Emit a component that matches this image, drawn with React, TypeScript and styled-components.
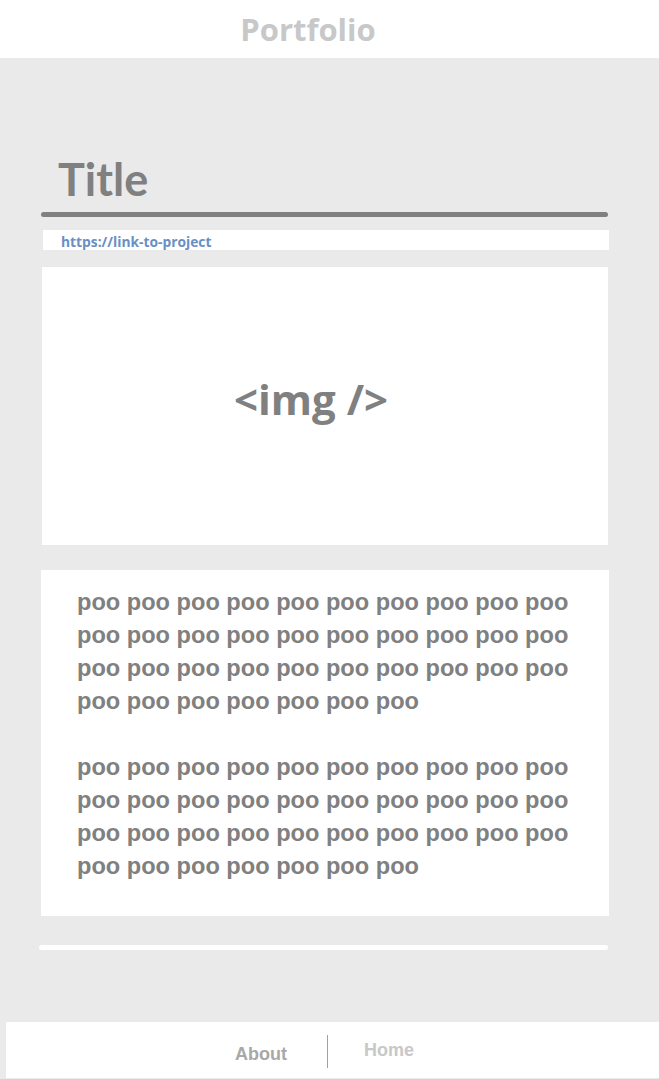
import React from "react";
import styled, { createGlobalStyle } from "styled-components";

const Global = createGlobalStyle`
  html, body {
    margin: 0;
    padding: 0;
    background: #eaeaea;
  }
  * { box-sizing: border-box; }
`;

const Page = styled.div`
  display: flex;
  flex-direction: column;
  min-height: 1079px;
  background: #eaeaea;
`;

const Header = styled.header`
  height: 58px;
  background: #ffffff;
  display: flex;
  align-items: center;
  justify-content: center;
  padding-right: 43px;
`;

const Brand = styled.h1`
  margin: 0;
  font-family: "Open Sans", sans-serif;
  font-weight: 700;
  font-size: 31px;
  line-height: 1;
  color: #c8c8c8;
`;

const Main = styled.main`
  width: 568px;
  margin: 0 0 0 41px;
  display: flex;
  flex-direction: column;
  padding-top: 99px;
`;

const Title = styled.h2`
  margin: 0;
  padding-left: 17px;
  font-family: Lato, "Open Sans", sans-serif;
  font-weight: 700;
  font-size: 45px;
  line-height: 1;
  color: #808080;
`;

const Rule = styled.div<{ $light?: boolean; $top: number }>`
  height: 5px;
  border-radius: 3px;
  margin-top: ${(p) => p.$top}px;
  margin-left: ${(p) => (p.$light ? -2 : 0)}px;
  width: ${(p) => (p.$light ? 569 : 567)}px;
  background: ${(p) => (p.$light ? "#ffffff" : "#808080")};
`;

const LinkBar = styled.div`
  margin-top: 13px;
  margin-left: 2px;
  height: 20px;
  background: #ffffff;
  display: flex;
  align-items: center;
  padding-left: 18px;
  padding-top: 3px;
`;

const LinkText = styled.a`
  font-family: "Open Sans", sans-serif;
  font-weight: 700;
  font-size: 13.8px;
  color: #6a8fc4;
  text-decoration: none;
  line-height: 1;
`;

const ImageBox = styled.div`
  margin-top: 17px;
  margin-left: 1px;
  width: 566px;
  height: 278px;
  background: #ffffff;
  display: flex;
  align-items: center;
  justify-content: center;
  padding-bottom: 16px;
  padding-right: 28px;
`;

const ImgLabel = styled.span`
  font-family: "Open Sans", sans-serif;
  font-weight: 700;
  font-size: 42px;
  color: #808080;
`;

const TextCard = styled.section`
  margin-top: 25px;
  background: #ffffff;
  padding: 16px 20px 34px 36px;
  height: 346px;
`;

const Para = styled.p`
  margin: 0 0 33px 0;
  font-family: "Liberation Sans", Arial, sans-serif;
  font-weight: 700;
  font-size: 23.6px;
  line-height: 33px;
  color: #808080;
  &:last-child { margin-bottom: 0; }
`;

const Footer = styled.footer`
  margin-top: auto;
  margin-left: 6px;
  height: 56px;
  margin-bottom: 1px;
  background: #ffffff;
  display: flex;
  align-items: center;
  justify-content: center;
  padding-right: 16px;
`;

const NavItem = styled.a<{ $muted?: boolean }>`
  font-family: "Liberation Sans", Arial, sans-serif;
  font-weight: 700;
  font-size: 18px;
  line-height: 1;
  text-decoration: none;
  color: ${(p) => (p.$muted ? "#c8c8c8" : "#a8a8a8")};
  margin-top: ${(p) => (p.$muted ? 0 : 8)}px;
`;

const Divider = styled.span`
  width: 1px;
  height: 33px;
  background: #a0a0a0;
  margin: 2px 36px 0 40px;
`;

const poo = (n: number) => Array.from({ length: n }, () => "poo").join(" ");

export default function App() {
  return (
    <>
      <Global />
      <Page>
        <Header>
          <Brand>Portfolio</Brand>
        </Header>
        <Main>
          <Title>Title</Title>
          <Rule $top={10} />
          <LinkBar>
            <LinkText href="#">https://link-to-project</LinkText>
          </LinkBar>
          <ImageBox>
            <ImgLabel>&lt;img /&gt;</ImgLabel>
          </ImageBox>
          <TextCard>
            <Para>{poo(37)}</Para>
            <Para>{poo(37)}</Para>
          </TextCard>
          <Rule $light $top={29} />
        </Main>
        <Footer>
          <NavItem href="#">About</NavItem>
          <Divider />
          <NavItem href="#" $muted>
            Home
          </NavItem>
        </Footer>
      </Page>
    </>
  );
}
